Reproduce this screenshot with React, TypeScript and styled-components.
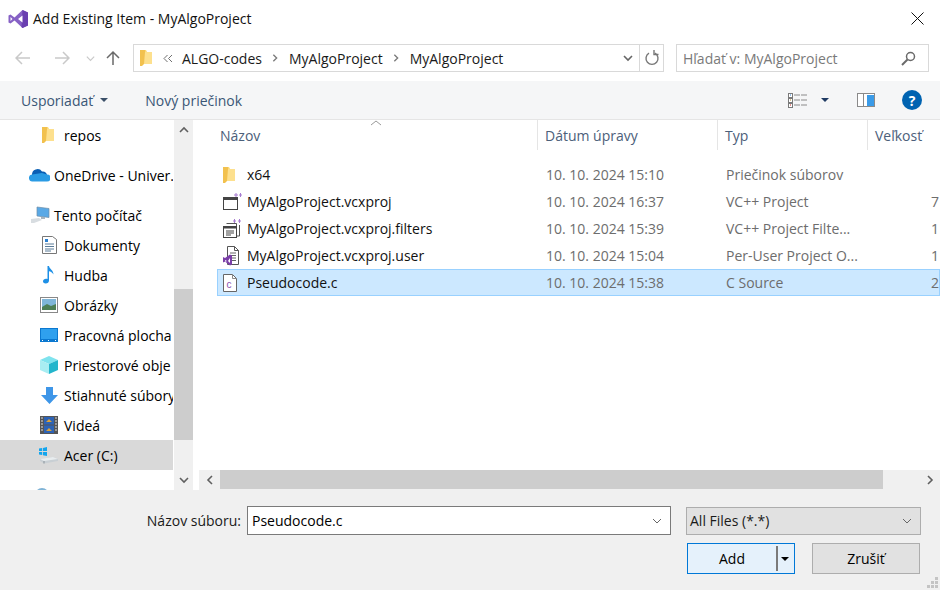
import styled, { createGlobalStyle } from 'styled-components';

const GlobalStyle = createGlobalStyle`
  html, body {
    margin: 0;
    padding: 0;
    background: #fff;
    overflow: hidden;
  }
  * { box-sizing: border-box; }
  body {
    font-family: 'Open Sans', 'Noto Sans', 'Liberation Sans', sans-serif;
    font-size: 14px;
    color: #000;
  }
`;

const FolderIcon = () => (
  <svg width="14" height="18" viewBox="0 0 14 18">
    <path d="M1 1h6l1 2h5v12H4l-3 2z" fill="#fcd975" />
    <path d="M1 1h5v13l-3 3H1z" fill="#f2c14e" />
    <path d="M6 3h7v12H5z" fill="#fde08e" />
  </svg>
);

const ProjectIcon = () => (
  <svg width="20" height="18" viewBox="0 0 20 18">
    <rect x="1.5" y="4.5" width="14" height="12" fill="#fff" stroke="#444" />
    <rect x="1" y="4" width="15" height="3" fill="#444" />
    <path d="M12 2h4M14 0v4M17 2h3M18.5 0v4" stroke="#a67bd0" strokeWidth="1" />
  </svg>
);

const FiltersIcon = () => (
  <svg width="20" height="20" viewBox="0 0 20 20">
    <path d="M4.5 4.5h10v3M17.5 6v11h-3" fill="none" stroke="#555" />
    <rect x="1.5" y="7.5" width="13" height="11" fill="#fff" stroke="#444" />
    <rect x="1" y="7" width="14" height="2.5" fill="#444" />
    <path d="M4 12h8M4 14h8M4 16h5" stroke="#444" />
    <path d="M11 2h3M12.5 0v4M16 2h3M17.5 0v4" stroke="#a67bd0" />
  </svg>
);

const UserIcon = () => (
  <svg width="18" height="20" viewBox="0 0 18 20">
    <path d="M5.5 .5h7l4 4v14h-11z" fill="#fff" stroke="#555" />
    <path d="M12.5 .5v4h4" fill="none" stroke="#555" />
    <path d="M8 7h6M8 9.500h6M10 12h4M10 14.500h4" stroke="#666" />
    <path d="M1 11l2 1 5-3.500 2 1v9l-2 1-5-4-2 1zM3 14v2l2-1zM8 12l-2 3 2 2z" fill="#7b3fa8" fillRule="evenodd" />
  </svg>
);

const SourceIcon = () => (
  <svg width="16" height="18" viewBox="0 0 16 18">
    <path d="M1.500 .5h9l4 4v13h-13z" fill="#fff" stroke="#666" />
    <path d="M10.500 .5v4h4" fill="none" stroke="#888" />
    <text x="4.500" y="14" fontSize="10" fontFamily="Liberation Sans, sans-serif" fill="#8a4fb0">c</text>
  </svg>
);

const CloudIcon = () => (
  <svg width="21" height="14" viewBox="0 0 21 14">
    <path d="M3 7a5.500 5.500 0 0 1 10-3.500A4.500 4.500 0 0 1 18 7z" fill="#0a5fb4" />
    <path d="M4 13.500a3.500 3.500 0 0 1-1-7L13 5l5 1.500a3.500 3.500 0 0 1 0 7z" fill="#2a9be4" />
  </svg>
);

const ComputerIcon = () => (
  <svg width="20" height="18" viewBox="0 0 20 18">
    <path d="M7 1l12 1.500v9L7 10z" fill="#5aa9e6" stroke="#6f8ea8" strokeWidth=".7" />
    <path d="M11 11h4v2h-4z" fill="#a9b4bd" />
    <path d="M1 13l8-1 3 2-8 3H1z" fill="#d8dde1" />
  </svg>
);

const DocumentIcon = () => (
  <svg width="15" height="18" viewBox="0 0 15 18">
    <path d="M.5 .5h10l4 3v14H.5z" fill="#fff" stroke="#777" />
    <path d="M3 3h3v3H3z" fill="#2a7fd0" />
    <path d="M3 8h9M3 10.500h9M3 13h9M3 15h6" stroke="#5b7c99" />
  </svg>
);

const MusicIcon = () => (
  <svg width="11" height="18" viewBox="0 0 11 18">
    <path d="M4.500 0H6c.3 3 4.500 4 4.500 8.500C9.500 6.500 7.500 5.500 6 5.200V14.500C6 16.500 4.500 17.500 2.700 17.500S0 16.600 0 15.300s1.500-2.500 3-2.500c.6 0 1.100.1 1.500.3z" fill="#1e90e6" />
  </svg>
);

const PicturesIcon = () => (
  <svg width="18" height="16" viewBox="0 0 18 16">
    <rect x=".5" y=".5" width="17" height="15" fill="#fff" stroke="#888" />
    <rect x="2" y="2" width="14" height="8" fill="#7fb6d8" />
    <path d="M2 10l5-3 4 2 5-2v6H2z" fill="#4d7f55" />
  </svg>
);

const DesktopIcon = () => (
  <svg width="18" height="14" viewBox="0 0 18 14">
    <rect width="18" height="14" fill="#0b78d0" />
    <path d="M1 1h16v10H1z" fill="#2fa0ee" />
    <path d="M2 12.500h1M8 12.500h1M15 12.500h1" stroke="#fff" />
  </svg>
);

const CubeIcon = () => (
  <svg width="18" height="18" viewBox="0 0 18 18">
    <path d="M9 0l9 4-9 4-9-4z" fill="#7fe3ee" />
    <path d="M0 4l9 4v10l-9-4z" fill="#a8edf2" />
    <path d="M18 4L9 8v10l9-4z" fill="#23b5cc" />
  </svg>
);

const DownloadIcon = () => (
  <svg width="17" height="17" viewBox="0 0 17 17">
    <path d="M5 0h7v8h5l-8.500 9L0 8h5z" fill="#3e96e8" />
  </svg>
);

const FilmIcon = () => (
  <svg width="18" height="18" viewBox="0 0 18 18">
    <rect width="18" height="18" fill="#555" />
    <path d="M1 2h2M1 5h2M1 8h2M1 11h2M1 14h2M15 2h2M15 5h2M15 8h2M15 11h2M15 14h2" stroke="#ddd" strokeWidth="1.200" />
    <rect x="4" y="1" width="10" height="7.500" fill="#2d63b5" />
    <rect x="4" y="9.500" width="10" height="7.500" fill="#2d63b5" />
    <path d="M6 6l3-3 3 3zM6 15l3-3 3 3z" fill="#d9a13a" />
  </svg>
);

const DriveIcon = () => (
  <svg width="19" height="18" viewBox="0 0 19 18">
    <path d="M0 2.500l3.200-.5v3H0zM4 1.900L8 1v4H4zM0 6h3.200v3L0 8.500zM4 6h4v4L4 9.200z" fill="#12a5ee" />
    <path d="M1 13l13-2 5 2v2L5 17.500 1 15z" fill="#c8cfd4" />
    <path d="M1 13l4 2 14-2-5-2z" fill="#e8ecee" />
    <path d="M5 15v2.500" stroke="#8b949a" />
  </svg>
);

const GlobeIcon = () => (
  <svg width="14" height="14" viewBox="0 0 14 14">
    <circle cx="7" cy="7" r="7" fill="#7fb3d6" />
    <path d="M3 3c2-1 3 0 4 1L5 7z" fill="#9fbf8f" />
  </svg>
);

const VsLogo = () => (
  <svg width="20" height="20" viewBox="0 0 20 20">
    <path d="M14.500 1L20 3.500v13L14.500 19 6.500 11.500 2.500 14.500.5 13.500v-7l2-1 4 3z" fill="#8661c5" />
    <path d="M14.500 1L20 3.500v13L14.500 19l-1-1z" fill="#6a3fb0" />
    <path d="M14.500 6.500L10 10l4.500 3.500zM2.500 8v4l2-2z" fill="#fff" />
  </svg>
);

const Dialog = styled.div`
  width: 940px;
  height: 590px;
  display: flex;
  flex-direction: column;
  overflow: hidden;
  background: #fff;
`;

const TitleBar = styled.div`
  height: 36px;
  flex: none;
  display: flex;
  align-items: center;
  padding: 1px 16px 0 8px;
  gap: 5px;
  font-size: 14px;
`;

const TitleText = styled.span`
  flex: 1;
  color: #111;
`;

const NavBar = styled.div`
  height: 45px;
  flex: none;
  display: flex;
  align-items: flex-start;
  padding-top: 8px;
  padding-right: 11px;
`;

const NavButtons = styled.div`
  width: 133px;
  height: 28px;
  flex: none;
  display: flex;
  align-items: center;
  padding-left: 15px;
`;

const NavIcon = styled.span<{ $gap: number }>`
  display: flex;
  margin-right: ${({ $gap }) => $gap}px;
`;

const AddressBox = styled.div`
  width: 531px;
  height: 28px;
  flex: none;
  border: 1px solid #d9d9d9;
  display: flex;
  align-items: center;
  padding-left: 5px;
`;

const Crumbs = styled.div`
  flex: 1;
  display: flex;
  align-items: center;
  white-space: nowrap;
  color: #1a1a1a;
`;

const CrumbSep = styled.span<{ $w: number }>`
  display: flex;
  justify-content: center;
  width: ${({ $w }) => $w}px;
`;

const AddressTail = styled.div`
  width: 24px;
  height: 26px;
  border-left: 1px solid #d9d9d9;
  display: flex;
  align-items: center;
  justify-content: center;
`;

const SearchBox = styled.div`
  width: 253px;
  height: 28px;
  margin-left: 12px;
  flex: none;
  border: 1px solid #d9d9d9;
  display: flex;
  align-items: center;
  justify-content: space-between;
  padding: 0 12px 0 6px;
  color: #7a7a7a;
`;

const ToolBar = styled.div`
  height: 39px;
  flex: none;
  background: #f5f6f7;
  border-bottom: 1px solid #e5e5e5;
  display: flex;
  align-items: center;
  padding: 0 18px 0 21px;
  color: #3a5676;
`;

const ToolItem = styled.span<{ $gap: number }>`
  display: flex;
  align-items: center;
  margin-right: ${({ $gap }) => $gap}px;
`;

const Caret = styled.span<{ $color?: string }>`
  width: 0;
  height: 0;
  border-left: 4px solid transparent;
  border-right: 4px solid transparent;
  border-top: 4px solid ${({ $color }) => $color || '#3a4f68'};
`;

const ToolSpacer = styled.div`
  flex: 1;
`;

const HelpBadge = styled.span`
  width: 20px;
  height: 20px;
  border-radius: 50%;
  background: #0063b1;
  color: #fff;
  font-weight: 700;
  font-size: 14px;
  display: flex;
  align-items: center;
  justify-content: center;
`;

const Main = styled.div`
  height: 370px;
  flex: none;
  display: flex;
`;

const Sidebar = styled.div`
  width: 174px;
  flex: none;
  height: 370px;
  overflow: hidden;
`;

const NavRow = styled.div<{ $indent: number; $gapAfter?: number; $selected?: boolean }>`
  height: 30px;
  width: 173px;
  flex: none;
  display: flex;
  align-items: center;
  padding-left: ${({ $indent }) => $indent}px;
  margin-bottom: ${({ $gapAfter }) => $gapAfter || 0}px;
  background: ${({ $selected }) => ($selected ? '#d9d9d9' : 'transparent')};
  white-space: nowrap;
  overflow: hidden;
`;

const NavIconBox = styled.span<{ $w: number }>`
  width: ${({ $w }) => $w}px;
  flex: none;
  display: flex;
  align-items: center;
`;

const VScroll = styled.div`
  width: 19px;
  flex: none;
  background: #f0f0f0;
  display: flex;
  flex-direction: column;
`;

const ScrollButton = styled.div<{ $w?: number }>`
  width: ${({ $w }) => ($w ? `${$w}px` : '100%')};
  height: 20px;
  flex: none;
  display: flex;
  align-items: center;
  justify-content: center;
`;

const VTrack = styled.div<{ $h: number }>`
  height: ${({ $h }) => $h}px;
  flex: none;
`;

const VThumb = styled.div`
  height: 151px;
  flex: none;
  background: #cdcdcd;
`;

const Splitter = styled.div`
  width: 6px;
  flex: none;
  background: #fff;
`;

const FilePane = styled.div`
  flex: 1;
  min-width: 0;
  display: flex;
  flex-direction: column;
  overflow: hidden;
`;

const HeaderRow = styled.div`
  height: 30px;
  flex: none;
  display: grid;
  grid-template-columns: 339px 180px 150px 1fr;
  color: #4c607a;
  position: relative;
`;

const HeaderCell = styled.div<{ $pad: number; $line?: boolean }>`
  display: flex;
  align-items: center;
  padding-left: ${({ $pad }) => $pad}px;
  border-right: ${({ $line }) => ($line ? '1px solid #e5e5e5' : 'none')};
  white-space: nowrap;
  overflow: hidden;
`;

const SortMark = styled.svg`
  position: absolute;
  left: 171px;
  top: 0;
`;

const FileList = styled.div`
  flex: 1;
  padding: 11px 0 0 18px;
`;

const FileRow = styled.div<{ $selected?: boolean }>`
  height: 27px;
  display: grid;
  grid-template-columns: 321px 180px 150px 1fr;
  align-items: center;
  background: ${({ $selected }) => ($selected ? '#cce8ff' : 'transparent')};
  box-shadow: ${({ $selected }) => ($selected ? 'inset 0 0 0 1px #99d1ff' : 'none')};
  white-space: nowrap;
`;

const NameCell = styled.div`
  display: flex;
  align-items: center;
  color: #111;
`;

const FileIconBox = styled.span`
  width: 30px;
  padding-left: 5px;
  flex: none;
  display: flex;
  align-items: center;
`;

const MetaCell = styled.div<{ $pad: number }>`
  padding-left: ${({ $pad }) => $pad}px;
  color: #6d6d6d;
  overflow: hidden;
`;

const HScroll = styled.div`
  height: 20px;
  flex: none;
  background: #f0f0f0;
  display: flex;
`;

const HThumb = styled.div`
  width: 663px;
  height: 19px;
  flex: none;
  background: #cdcdcd;
`;

const HTrack = styled.div`
  flex: 1;
`;

const Footer = styled.div`
  flex: 1;
  background: #f0f0f0;
  padding: 16px 19px 0 0;
  position: relative;
`;

const FormRow = styled.div`
  display: flex;
  align-items: center;
  height: 29px;
`;

const FormLabel = styled.label`
  width: 247px;
  flex: none;
  text-align: right;
  padding-right: 6px;
  color: #1a1a1a;
`;

const FileInput = styled.div`
  width: 424px;
  height: 29px;
  flex: none;
  background: #fff;
  border: 1px solid #7a7a7a;
  display: flex;
  align-items: center;
  justify-content: space-between;
  padding: 0 7px 0 4px;
`;

const FilterSelect = styled.div`
  width: 235px;
  height: 28px;
  margin-left: 15px;
  flex: none;
  background: #e1e1e1;
  border: 1px solid #adadad;
  display: flex;
  align-items: center;
  justify-content: space-between;
  padding: 0 7px 0 3px;
  color: #1a1a1a;
`;

const ButtonRow = styled.div`
  display: flex;
  justify-content: flex-end;
  gap: 17px;
  margin-top: 8px;
  padding-right: 1px;
`;

const SplitButton = styled.div`
  width: 108px;
  height: 31px;
  background: #e5f1fb;
  border: 1px solid #0078d7;
  display: flex;
  align-items: center;
`;

const SplitLabel = styled.span`
  width: 88px;
  text-align: center;
  padding-left: 0;
`;

const SplitDivider = styled.span`
  width: 2px;
  height: 25px;
  background: #7a7a7a;
  margin-right: 3px;
  margin-left: 0;
`;

const PlainButton = styled.div`
  width: 108px;
  height: 31px;
  background: #e1e1e1;
  border: 1px solid #adadad;
  display: flex;
  align-items: center;
  justify-content: center;
`;

const Grip = styled.svg`
  position: absolute;
  right: 1px;
  bottom: 1px;
`;

const Chevron = ({ dir, color = '#606060', size = 12, width = 1.6 }: { dir: 'up' | 'down' | 'left' | 'right'; color?: string; size?: number; width?: number }) => {
  const d = { up: 'M2 8l4-4 4 4', down: 'M2 4l4 4 4-4', left: 'M8 2L4 6l4 4', right: 'M4 2l4 4-4 4' }[dir];
  return (
    <svg width={size} height={size} viewBox="0 0 12 12">
      <path d={d} fill="none" stroke={color} strokeWidth={width} />
    </svg>
  );
};

const ArrowIcon = ({ d, color }: { d: string; color: string }) => (
  <svg width="16" height="16" viewBox="0 0 16 16">
    <path d={d} fill="none" stroke={color} strokeWidth="1.500" />
  </svg>
);

const places = [
  { label: 'repos', icon: <FolderIcon />, indent: 41, w: 23, gap: 10 },
  { label: 'OneDrive - Univer.', icon: <CloudIcon />, indent: 29, w: 25, gap: 10 },
  { label: 'Tento počítač', icon: <ComputerIcon />, indent: 30, w: 24 },
  { label: 'Dokumenty', icon: <DocumentIcon />, indent: 42, w: 22 },
  { label: 'Hudba', icon: <MusicIcon />, indent: 43, w: 21 },
  { label: 'Obrázky', icon: <PicturesIcon />, indent: 40, w: 24 },
  { label: 'Pracovná plocha', icon: <DesktopIcon />, indent: 40, w: 24 },
  { label: 'Priestorové obje', icon: <CubeIcon />, indent: 40, w: 24 },
  { label: 'Stiahnuté súbory', icon: <DownloadIcon />, indent: 41, w: 23 },
  { label: 'Videá', icon: <FilmIcon />, indent: 40, w: 24 },
  { label: 'Acer (C:)', icon: <DriveIcon />, indent: 39, w: 25, gap: 10, selected: true },
  { label: 'Sieť', icon: <GlobeIcon />, indent: 35, w: 24 },
];

const files = [
  { name: 'x64', icon: <FolderIcon />, date: '10. 10. 2024 15:10', type: 'Priečinok súborov', size: '' },
  { name: 'MyAlgoProject.vcxproj', icon: <ProjectIcon />, date: '10. 10. 2024 16:37', type: 'VC++ Project', size: '7 KB' },
  { name: 'MyAlgoProject.vcxproj.filters', icon: <FiltersIcon />, date: '10. 10. 2024 15:39', type: 'VC++ Project Filte...', size: '1 KB' },
  { name: 'MyAlgoProject.vcxproj.user', icon: <UserIcon />, date: '10. 10. 2024 15:04', type: 'Per-User Project O...', size: '1 KB' },
  { name: 'Pseudocode.c', icon: <SourceIcon />, date: '10. 10. 2024 15:38', type: 'C Source', size: '2 KB', selected: true },
];

const App = () => (
  <Dialog>
    <GlobalStyle />
    <TitleBar>
      <VsLogo />
      <TitleText>Add Existing Item - MyAlgoProject</TitleText>
      <svg width="13" height="13" viewBox="0 0 13 13">
        <path d="M.5 .5l12 12M12.500 .5l-12 12" stroke="#111" strokeWidth="1" />
      </svg>
    </TitleBar>

    <NavBar>
      <NavButtons>
        <NavIcon $gap={23}><ArrowIcon d="M15 8H1M7 2L1 8l6 6" color="#c9c9c9" /></NavIcon>
        <NavIcon $gap={15}><ArrowIcon d="M1 8h14M9 2l6 6-6 6" color="#c9c9c9" /></NavIcon>
        <NavIcon $gap={9}><Chevron dir="down" color="#c9c9c9" size={11} width={1.3} /></NavIcon>
        <NavIcon $gap={0}><ArrowIcon d="M8 15V2M2 8l6-6 6 6" color="#6a6a6a" /></NavIcon>
      </NavButtons>
      <AddressBox>
        <Crumbs>
          <FolderIcon />
          <CrumbSep $w={29}><svg width="10" height="9" viewBox="0 0 10 9"><path d="M4.500 1L1 4.500 4.500 8M9 1L5.500 4.500 9 8" fill="none" stroke="#707070" /></svg></CrumbSep>
          ALGO-codes
          <CrumbSep $w={27}><Chevron dir="right" color="#7a7a7a" size={10} /></CrumbSep>
          MyAlgoProject
          <CrumbSep $w={27}><Chevron dir="right" color="#7a7a7a" size={10} /></CrumbSep>
          MyAlgoProject
        </Crumbs>
        <Chevron dir="down" color="#666" />
        <span style={{ width: 5 }} />
        <AddressTail>
          <svg width="16" height="16" viewBox="0 0 16 16">
            <path d="M5 3.200a6 6 0 1 0 6 0" fill="none" stroke="#777" strokeWidth="1.400" />
            <path d="M10 0v4.500h4.500" fill="none" stroke="#777" strokeWidth="1.400" />
          </svg>
        </AddressTail>
      </AddressBox>
      <SearchBox>
        Hľadať v: MyAlgoProject
        <svg width="15" height="15" viewBox="0 0 15 15">
          <circle cx="9.500" cy="5.500" r="4" fill="none" stroke="#6a6a6a" strokeWidth="1.500" />
          <path d="M6.500 8.500L1 14" stroke="#6a6a6a" strokeWidth="2" />
        </svg>
      </SearchBox>
    </NavBar>

    <ToolBar>
      <ToolItem $gap={7}>Usporiadať</ToolItem>
      <ToolItem $gap={37}><Caret /></ToolItem>
      <ToolItem $gap={0}>Nový priečinok</ToolItem>
      <ToolSpacer />
      <ToolItem $gap={14}>
        <svg width="19" height="15" viewBox="0 0 19 15">
          <rect x=".5" y=".5" width="4" height="4" fill="#fff" stroke="#7a7a7a" />
          <rect x=".5" y="5.500" width="4" height="4" fill="#fff" stroke="#7a7a7a" />
          <rect x=".5" y="10.500" width="4" height="4" fill="#fff" stroke="#7a7a7a" />
          <path d="M2 2h1" stroke="#2a7fd0" />
          <path d="M2 7h1" stroke="#b08a20" />
          <path d="M2 12h1" stroke="#c02020" />
          <path d="M6 2h6M13 2h6M6 7h6M13 7h6M6 12h6M13 12h6" stroke="#8a8a8a" />
        </svg>
      </ToolItem>
      <ToolItem $gap={28}><Caret $color="#1f3a63" /></ToolItem>
      <ToolItem $gap={27}>
        <svg width="18" height="14" viewBox="0 0 18 14">
          <rect x=".5" y=".5" width="17" height="13" fill="#fff" stroke="#8a8a8a" />
          <path d="M6.500 0v14" stroke="#8a8a8a" />
          <rect x="10" y="2" width="7" height="11" fill="#3a9be8" />
        </svg>
      </ToolItem>
      <HelpBadge>?</HelpBadge>
    </ToolBar>

    <Main>
      <Sidebar>
        {places.map((p) => (
          <NavRow key={p.label} $indent={p.indent} $gapAfter={p.gap} $selected={p.selected}>
            <NavIconBox $w={p.w}>{p.icon}</NavIconBox>
            {p.label}
          </NavRow>
        ))}
      </Sidebar>
      <VScroll>
        <ScrollButton><Chevron dir="up" /></ScrollButton>
        <VTrack $h={149} />
        <VThumb />
        <VTrack $h={30} />
        <ScrollButton><Chevron dir="down" /></ScrollButton>
      </VScroll>
      <Splitter />
      <FilePane>
        <HeaderRow>
          <HeaderCell $pad={21} $line>Názov</HeaderCell>
          <HeaderCell $pad={7} $line>Dátum úpravy</HeaderCell>
          <HeaderCell $pad={7} $line>Typ</HeaderCell>
          <HeaderCell $pad={7}>Veľkosť</HeaderCell>
          <SortMark width="12" height="6" viewBox="0 0 12 6">
            <path d="M1 5l5-4 5 4" fill="none" stroke="#9a9a9a" />
          </SortMark>
        </HeaderRow>
        <FileList>
          {files.map((f) => (
            <FileRow key={f.name} $selected={f.selected}>
              <NameCell>
                <FileIconBox>{f.icon}</FileIconBox>
                {f.name}
              </NameCell>
              <MetaCell $pad={8}>{f.date}</MetaCell>
              <MetaCell $pad={8}>{f.type}</MetaCell>
              <MetaCell $pad={63}>{f.size}</MetaCell>
            </FileRow>
          ))}
        </FileList>
        <HScroll>
          <ScrollButton $w={21}><Chevron dir="left" /></ScrollButton>
          <HThumb />
          <HTrack />
          <ScrollButton $w={20}><Chevron dir="right" /></ScrollButton>
        </HScroll>
      </FilePane>
    </Main>

    <Footer>
      <FormRow>
        <FormLabel>Názov súboru:</FormLabel>
        <FileInput>
          Pseudocode.c
          <Chevron dir="down" color="#666" width={1} />
        </FileInput>
        <FilterSelect>
          All Files (*.*)
          <Chevron dir="down" color="#666" width={1} />
        </FilterSelect>
      </FormRow>
      <ButtonRow>
        <SplitButton>
          <SplitLabel>Add</SplitLabel>
          <SplitDivider />
          <Caret $color="#000" />
        </SplitButton>
        <PlainButton>Zrušiť</PlainButton>
      </ButtonRow>
      <Grip width="12" height="12" viewBox="0 0 12 12">
        <path d="M8 0h3v3H8zM4 4h3v3H4zM8 4h3v3H8zM0 8h3v3H0zM4 8h3v3H4zM8 8h3v3H8z" fill="#c4c4c4" />
      </Grip>
    </Footer>
  </Dialog>
);

export default App;
